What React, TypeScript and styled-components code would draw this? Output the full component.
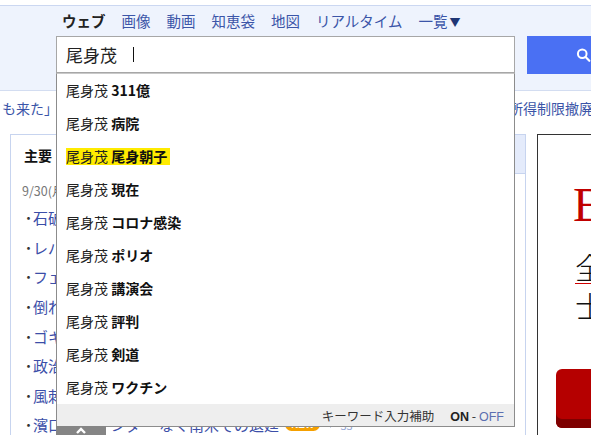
import React from 'react';
import styled, { createGlobalStyle } from 'styled-components';

const GlobalStyle = createGlobalStyle`
  html, body {
    margin: 0;
    padding: 0;
    background: #fff;
    overflow: hidden;
  }
  body {
    font-family: "Noto Sans CJK JP", "Noto Sans", sans-serif;
    color: #222;
  }
`;

const tabs = ['画像', '動画', '知恵袋', '地図', 'リアルタイム'];

const suggestions = ['311億', '病院', '尾身朝子', '現在', 'コロナ感染', 'ポリオ', '講演会', '評判', '剣道', 'ワクチン'];

const headlines = [
  '石破首相 初の所信表明へ',
  'レバノン南部で地上作戦',
  'フェンタニル密輸の疑い',
  '倒れた男性を救助 表彰',
  'ゴキブリ駆除で火災か',
  '政治資金パーティー再開',
  '風刺画で批判相次ぐ',
];

const App = () => {
  return (
    <Page>
      <GlobalStyle />
      <Header>
        <Nav>
          <NavTab $active>ウェブ</NavTab>
          {tabs.map((t) => (
            <NavTab key={t}>{t}</NavTab>
          ))}
          <NavTab>
            一覧<Caret>▼</Caret>
          </NavTab>
        </Nav>
        <SearchRow>
          <SearchBox>
            <InputField>
              尾身茂<Cursor />
            </InputField>
            <Dropdown>
              {suggestions.map((s, i) => (
                <SuggestRow key={s}>
                  <SuggestText $highlight={i === 2}>
                    尾身茂 <b>{s}</b>
                  </SuggestText>
                </SuggestRow>
              ))}
              <DropdownFooter>
                キーワード入力補助
                <Toggle>
                  <b>ON</b> - <OffLink>OFF</OffLink>
                </Toggle>
              </DropdownFooter>
              <CloseTab>
                <svg width="14" height="8" viewBox="0 0 14 8">
                  <path d="M3 7 L7 3 L11 7" fill="none" stroke="#fff" strokeWidth="2.4" />
                </svg>
              </CloseTab>
            </Dropdown>
          </SearchBox>
          <SearchButton>
            <svg width="18" height="18" viewBox="0 0 18 18">
              <circle cx="7.5" cy="7.5" r="5.2" fill="none" stroke="#fff" strokeWidth="2.4" />
              <path d="M11.5 11.5 L16 16" stroke="#fff" strokeWidth="2.6" strokeLinecap="round" />
            </svg>
            検索
          </SearchButton>
        </SearchRow>
      </Header>

      <Ticker>
        <TickerItem>も来た」</TickerItem>
        <TickerItem>児童手当の所得制限撤廃へ</TickerItem>
      </Ticker>

      <Main>
        <NewsPanel>
          <PanelTabs>
            <PanelTab $active>主要</PanelTab>
            <PanelTab>経済</PanelTab>
            <PanelTab>エンタメ</PanelTab>
            <PanelTab>スポーツ</PanelTab>
            <PanelTab>国内</PanelTab>
            <PanelTab>国際</PanelTab>
            <PanelTab>IT</PanelTab>
          </PanelTabs>
          <DateLine>9/30(月) 14:12更新</DateLine>
          <NewsList>
            {headlines.map((h) => (
              <NewsItem key={h}>
                <NewsLink>{h}</NewsLink>
              </NewsItem>
            ))}
            <NewsItem>
              <NewsLink>濱口監督 アンダー なく南米での退廷</NewsLink>
              <NewBadge>NEW</NewBadge>
              <Comments>
                <svg width="9" height="9" viewBox="0 0 9 9">
                  <path d="M1 1 H8 V6 H4 L2 8 V6 H1 Z" fill="#8fa3d3" />
                </svg>
                33
              </Comments>
            </NewsItem>
          </NewsList>
        </NewsPanel>

        <AdBox>
          <AdTitle>EV</AdTitle>
          <AdLine $underline>全国対応</AdLine>
          <AdLine>士業</AdLine>
          <AdButton>詳しく</AdButton>
        </AdBox>
      </Main>
    </Page>
  );
};

const Page = styled.div`
  width: 591px;
  height: 435px;
  overflow: hidden;
  padding-top: 5px;
  box-sizing: border-box;
`;

const Header = styled.div`
  background: #eef3fd;
  border-top: 1px solid #cbd7f1;
  border-bottom: 1px solid #d3ddf1;
  padding: 5px 0 16px;
  position: relative;
  z-index: 2;
`;

const Nav = styled.div`
  display: flex;
  gap: 16px;
  padding-left: 62px;
  height: 20px;
  align-items: center;
`;

const NavTab = styled.span<{ $active?: boolean }>`
  font-size: 14.5px;
  line-height: 20px;
  white-space: nowrap;
  color: ${(p) => (p.$active ? '#222' : '#3b55a8')};
  font-weight: ${(p) => (p.$active ? 700 : 400)};
`;

const Caret = styled.span`
  font-size: 11px;
  color: #1f3675;
  margin-left: 2px;
`;

const SearchRow = styled.div`
  display: flex;
  margin-top: 5px;
  padding-left: 56px;
  height: 38px;
`;

const SearchBox = styled.div`
  position: relative;
  width: 459px;
  flex-shrink: 0;
`;

const InputField = styled.div`
  box-sizing: border-box;
  height: 37px;
  border: 1px solid #a7a7a7;
  background: #fff;
  padding-left: 9px;
  display: flex;
  align-items: center;
  font-size: 17px;
  color: #222;
  white-space: pre;
`;

const Cursor = styled.span`
  display: inline-block;
  width: 1px;
  height: 15px;
  background: #111;
  margin-left: 16px;
`;

const Dropdown = styled.div`
  position: absolute;
  top: 37px;
  left: 0;
  width: 459px;
  box-sizing: border-box;
  background: #fff;
  border: 1px solid #8c8c8c;
  border-top: 1px solid #c9c9c9;
`;

const SuggestRow = styled.div`
  height: 33px;
  display: flex;
  align-items: center;
  padding-left: 9px;
`;

const SuggestText = styled.span<{ $highlight?: boolean }>`
  font-size: 14px;
  line-height: 17px;
  color: #222;
  white-space: pre;
  background: ${(p) => (p.$highlight ? '#ffeb00' : 'transparent')};
  padding-right: ${(p) => (p.$highlight ? '3px' : '0')};

  b {
    font-weight: 700;
    color: #111;
  }
`;

const DropdownFooter = styled.div`
  height: 22px;
  background: #eeeeee;
  display: flex;
  justify-content: flex-end;
  align-items: center;
  padding-right: 10px;
  font-size: 12.5px;
  color: #333;
`;

const Toggle = styled.span`
  margin-left: 16px;
  font-size: 12.5px;
  color: #333;

  b {
    font-family: "Liberation Sans", Arial, sans-serif;
    font-weight: 700;
    color: #222;
  }
`;

const OffLink = styled.span`
  font-family: "Liberation Sans", Arial, sans-serif;
  color: #5b6fb0;
`;

const CloseTab = styled.div`
  position: absolute;
  top: 100%;
  left: -1px;
  width: 50px;
  height: 14px;
  background: #858585;
  display: flex;
  justify-content: center;
  align-items: flex-start;
`;

const SearchButton = styled.div`
  margin-left: 12px;
  flex-shrink: 0;
  width: 100px;
  height: 38px;
  background: #4a70f3;
  color: #fff;
  display: flex;
  align-items: center;
  gap: 6px;
  padding-left: 49px;
  font-size: 15px;
  font-weight: 700;
  box-sizing: border-box;
  white-space: nowrap;
`;

const Ticker = styled.div`
  display: flex;
  height: 34px;
  align-items: center;
  white-space: nowrap;
  padding-left: 2px;
  gap: 381px;
`;

const TickerItem = styled.span`
  font-size: 14px;
  color: #3b55a8;
  flex-shrink: 0;
`;

const Main = styled.div`
  display: flex;
  margin-top: 9px;
  padding-left: 10px;
  align-items: flex-start;
`;

const NewsPanel = styled.div`
  width: 516px;
  flex-shrink: 0;
  box-sizing: border-box;
  border: 1px solid #c7d4ef;
  border-bottom: none;
  height: 320px;
`;

const PanelTabs = styled.div`
  display: flex;
  height: 39px;
`;

const PanelTab = styled.div<{ $active?: boolean }>`
  flex: ${(p) => (p.$active ? '0 0 66px' : '1')};
  box-sizing: border-box;
  display: flex;
  align-items: center;
  padding-left: ${(p) => (p.$active ? '13px' : '10px')};
  font-size: 14px;
  font-weight: ${(p) => (p.$active ? 700 : 400)};
  color: ${(p) => (p.$active ? '#111' : '#3b55a8')};
  background: ${(p) => (p.$active ? '#fff' : '#e4ebfb')};
  border-left: ${(p) => (p.$active ? 'none' : '1px solid #c7d4ef')};
  border-bottom: ${(p) => (p.$active ? 'none' : '1px solid #c7d4ef')};
`;

const DateLine = styled.div`
  margin-top: 7px;
  padding-left: 11px;
  font-size: 12.5px;
  color: #777;
  line-height: 20px;
`;

const NewsList = styled.ul`
  list-style: none;
  margin: 2px 0 0;
  padding: 0 0 0 11px;
`;

const NewsItem = styled.li`
  height: 29.6px;
  display: flex;
  align-items: center;
  white-space: nowrap;

  &::before {
    content: '・';
    font-size: 13px;
    color: #333;
    width: 10px;
    margin-right: 1px;
    text-align: left;
  }
`;

const NewsLink = styled.span`
  font-size: 15px;
  color: #3b4ea8;
`;

const NewBadge = styled.span`
  margin-left: 6px;
  background: #f5a000;
  color: #fff;
  font-family: "Liberation Sans", Arial, sans-serif;
  font-size: 10px;
  font-weight: 700;
  border-radius: 8px;
  padding: 1px 6px;
`;

const Comments = styled.span`
  margin-left: 8px;
  font-size: 11px;
  color: #8fa3d3;
  display: flex;
  align-items: center;
  gap: 3px;
`;

const AdBox = styled.div`
  margin-left: 11px;
  flex-shrink: 0;
  width: 200px;
  height: 320px;
  box-sizing: border-box;
  border: 1px solid #333;
  padding-left: 35px;
`;

const AdTitle = styled.div`
  font-family: "Liberation Serif", "Times New Roman", serif;
  font-size: 48px;
  line-height: 48px;
  color: #c00000;
  margin-top: 46px;
`;

const AdLine = styled.div<{ $underline?: boolean }>`
  font-family: "Noto Sans CJK JP", sans-serif;
  font-weight: 300;
  font-size: 30px;
  line-height: 34px;
  color: #111;
  margin-top: ${(p) => (p.$underline ? '20px' : '4px')};
  border-bottom: ${(p) => (p.$underline ? '1px solid #d00000' : 'none')};
  margin-left: 2px;
  white-space: nowrap;
`;

const AdButton = styled.div`
  margin-top: 47px;
  margin-left: -17px;
  height: 59px;
  border-radius: 6px;
  background: #b50000;
  box-shadow: inset 0 -9px 0 #7e0000;
  color: #fff;
  font-size: 18px;
  font-weight: 700;
  display: flex;
  align-items: center;
  padding-left: 40px;
`;

export default App;
